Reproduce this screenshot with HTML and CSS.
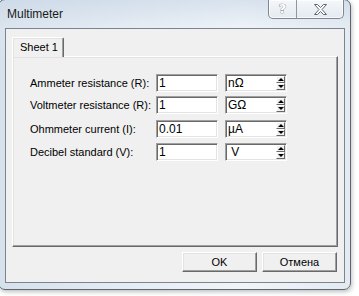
FILE: index.html
```html
<!DOCTYPE html>
<html>
<head>
<meta charset="utf-8">
<link rel="stylesheet" href="styles.css">
</head>
<body>
<div class="window">
  <div class="titlebar">
    <span class="title">Multimeter</span>
    <div class="caption-btns">
      <div class="cbtn help"><span class="qmark">?</span></div>
      <div class="cbtn close">
        <svg width="15" height="11" viewBox="0 0 15 11"><path d="M1.5 0.5h3l3 3 3-3h3l-4.5 5 4.5 5h-3l-3-3-3 3h-3l4.5-5z" fill="#fff" stroke="#5b6876" stroke-width="1" stroke-linejoin="round"/></svg>
      </div>
    </div>
  </div>
  <div class="client">
    <div class="tabs"><div class="tab">Sheet 1</div></div>
    <div class="page">
      <div class="row r1">
        <span class="label">Ammeter resistance (R):</span>
        <div class="edit">1</div>
        <div class="edit unit"><span>nΩ</span><div class="spin"><div class="sb up"><i></i></div><div class="sb down"><i></i></div></div></div>
      </div>
      <div class="row r2">
        <span class="label">Voltmeter resistance (R):</span>
        <div class="edit">1</div>
        <div class="edit unit"><span>GΩ</span><div class="spin"><div class="sb up"><i></i></div><div class="sb down"><i></i></div></div></div>
      </div>
      <div class="row r3">
        <span class="label">Ohmmeter current (I):</span>
        <div class="edit">0.01</div>
        <div class="edit unit"><span>µA</span><div class="spin"><div class="sb up"><i></i></div><div class="sb down"><i></i></div></div></div>
      </div>
      <div class="row r4">
        <span class="label">Decibel standard (V):</span>
        <div class="edit">1</div>
        <div class="edit unit"><span>&nbsp;V</span><div class="spin"><div class="sb up"><i></i></div><div class="sb down"><i></i></div></div></div>
      </div>
    </div>
    <div class="buttons">
      <div class="btn">OK</div>
      <div class="btn">Отмена</div>
    </div>
  </div>
</div>
</body>
</html>
```
FILE: styles.css
```css
html, body {
  margin: 0;
  padding: 0;
}
body {
  width: 359px;
  height: 296px;
  overflow: hidden;
  background: #ffffff;
  font-family: "Liberation Sans", Arial, sans-serif;
  font-size: 11px;
  color: #000;
}
.window {
  box-sizing: border-box;
  width: 353px;
  height: 291px;
  margin: -1px 0 0 -2px;
  border: 1px solid #5c6570;
  border-radius: 7px;
  padding: 0 5px 6px 6px;
  background: linear-gradient(to bottom, rgba(200,214,230,0.6) 0, rgba(230,237,245,0.3) 28px, rgba(255,255,255,0) 60px),
              linear-gradient(to right, #d6e1ec 0%, #e6edf4 40%, #f1f5f9 70%, #e3eaf1 100%);
  box-shadow: 1px 2px 4px rgba(0,0,0,0.25);
}
.titlebar {
  height: 28px;
  display: flex;
  align-items: flex-start;
  justify-content: space-between;
}
.title {
  margin: 7px 0 0 2px;
  font-size: 12px;
  line-height: 15px;
  color: #1a1a1a;
}
.caption-btns {
  display: flex;
  margin: 0 1px 0 0;
  height: 19px;
  box-sizing: border-box;
  border: 1px solid #7d8894;
  border-top: none;
  border-radius: 0 0 5px 5px;
  background: linear-gradient(#f4f7fa, #e4eaf0);
  box-shadow: inset 0 0 0 1px rgba(255,255,255,0.7);
}
.cbtn {
  display: flex;
  align-items: center;
  justify-content: center;
  height: 18px;
}
.help {
  width: 27px;
  border-right: 1px solid #8d98a4;
}
.close {
  width: 46px;
}
.qmark {
  font-family: "DejaVu Sans", sans-serif;
  font-weight: bold;
  font-size: 13px;
  color: #ffffff;
  -webkit-text-stroke: 0.6px #5b6876;
  paint-order: stroke fill;
  line-height: 14px;
  margin-top: -1px;
}
.client {
  box-sizing: border-box;
  height: 255px;
  border: 1px solid #7a8590;
  background: #f0f0f0;
  padding: 8px 6px 0 6px;
  display: flex;
  flex-direction: column;
}
.tabs {
  display: flex;
  height: 19px;
  position: relative;
  z-index: 1;
}
.tab {
  box-sizing: border-box;
  width: 52px;
  height: 20px;
  padding: 3px 0 0 7px;
  border-top: 1px solid #ffffff;
  border-left: 1px solid #ffffff;
  border-right: 1px solid #696969;
  box-shadow: inset -1px 0 #a0a0a0, inset 1px 1px #e3e3e3;
  border-radius: 2px 2px 0 0;
  background: #f0f0f0;
  line-height: 13px;
}
.page {
  box-sizing: border-box;
  height: 191px;
  border-top: 1px solid #ffffff;
  border-left: 1px solid #ffffff;
  border-right: 1px solid #696969;
  border-bottom: 1px solid #696969;
  box-shadow: inset -1px -1px #a0a0a0, inset 1px 1px #e3e3e3;
  padding: 17px 0 0 17px;
}
.row {
  display: flex;
  align-items: center;
  height: 18px;
}
.r2 { margin-top: 4px; }
.r3 { margin-top: 6px; }
.r4 { margin-top: 5px; }
.label {
  width: 126px;
  line-height: 18px;
  white-space: nowrap;
}
.edit {
  box-sizing: border-box;
  width: 62px;
  height: 18px;
  border: 1px solid;
  border-color: #a0a0a0 #ffffff #ffffff #a0a0a0;
  box-shadow: inset 1px 1px #696969, inset -1px -1px #e3e3e3;
  background: #ffffff;
  padding: 0 0 0 2px;
  line-height: 16px;
  font-size: 12px;
}
.unit {
  margin-left: 7px;
  display: flex;
  justify-content: space-between;
  padding: 0 1px 0 2px;
}
.spin {
  display: flex;
  flex-direction: column;
  width: 9px;
  margin-top: 1px;
  height: 14px;
}
.sb {
  flex: 1;
  box-sizing: border-box;
  background: #f0f0f0;
  border: 1px solid;
  border-color: #ffffff #696969 #696969 #ffffff;
  display: flex;
  align-items: center;
  justify-content: center;
}
.sb i {
  width: 0;
  height: 0;
  border-left: 3px solid transparent;
  border-right: 3px solid transparent;
}
.up i { border-bottom: 3px solid #000; }
.down i { border-top: 3px solid #000; }
.buttons {
  display: flex;
  justify-content: flex-end;
  gap: 5px;
  margin-top: 5px;
  padding-right: 1px;
}
.btn {
  box-sizing: border-box;
  width: 75px;
  height: 20px;
  border: 1px solid;
  border-color: #ffffff #696969 #696969 #ffffff;
  box-shadow: inset -1px -1px #a0a0a0, inset 1px 1px #e3e3e3;
  background: #f0f0f0;
  text-align: center;
  line-height: 18px;
  font-size: 11px;
}
```
